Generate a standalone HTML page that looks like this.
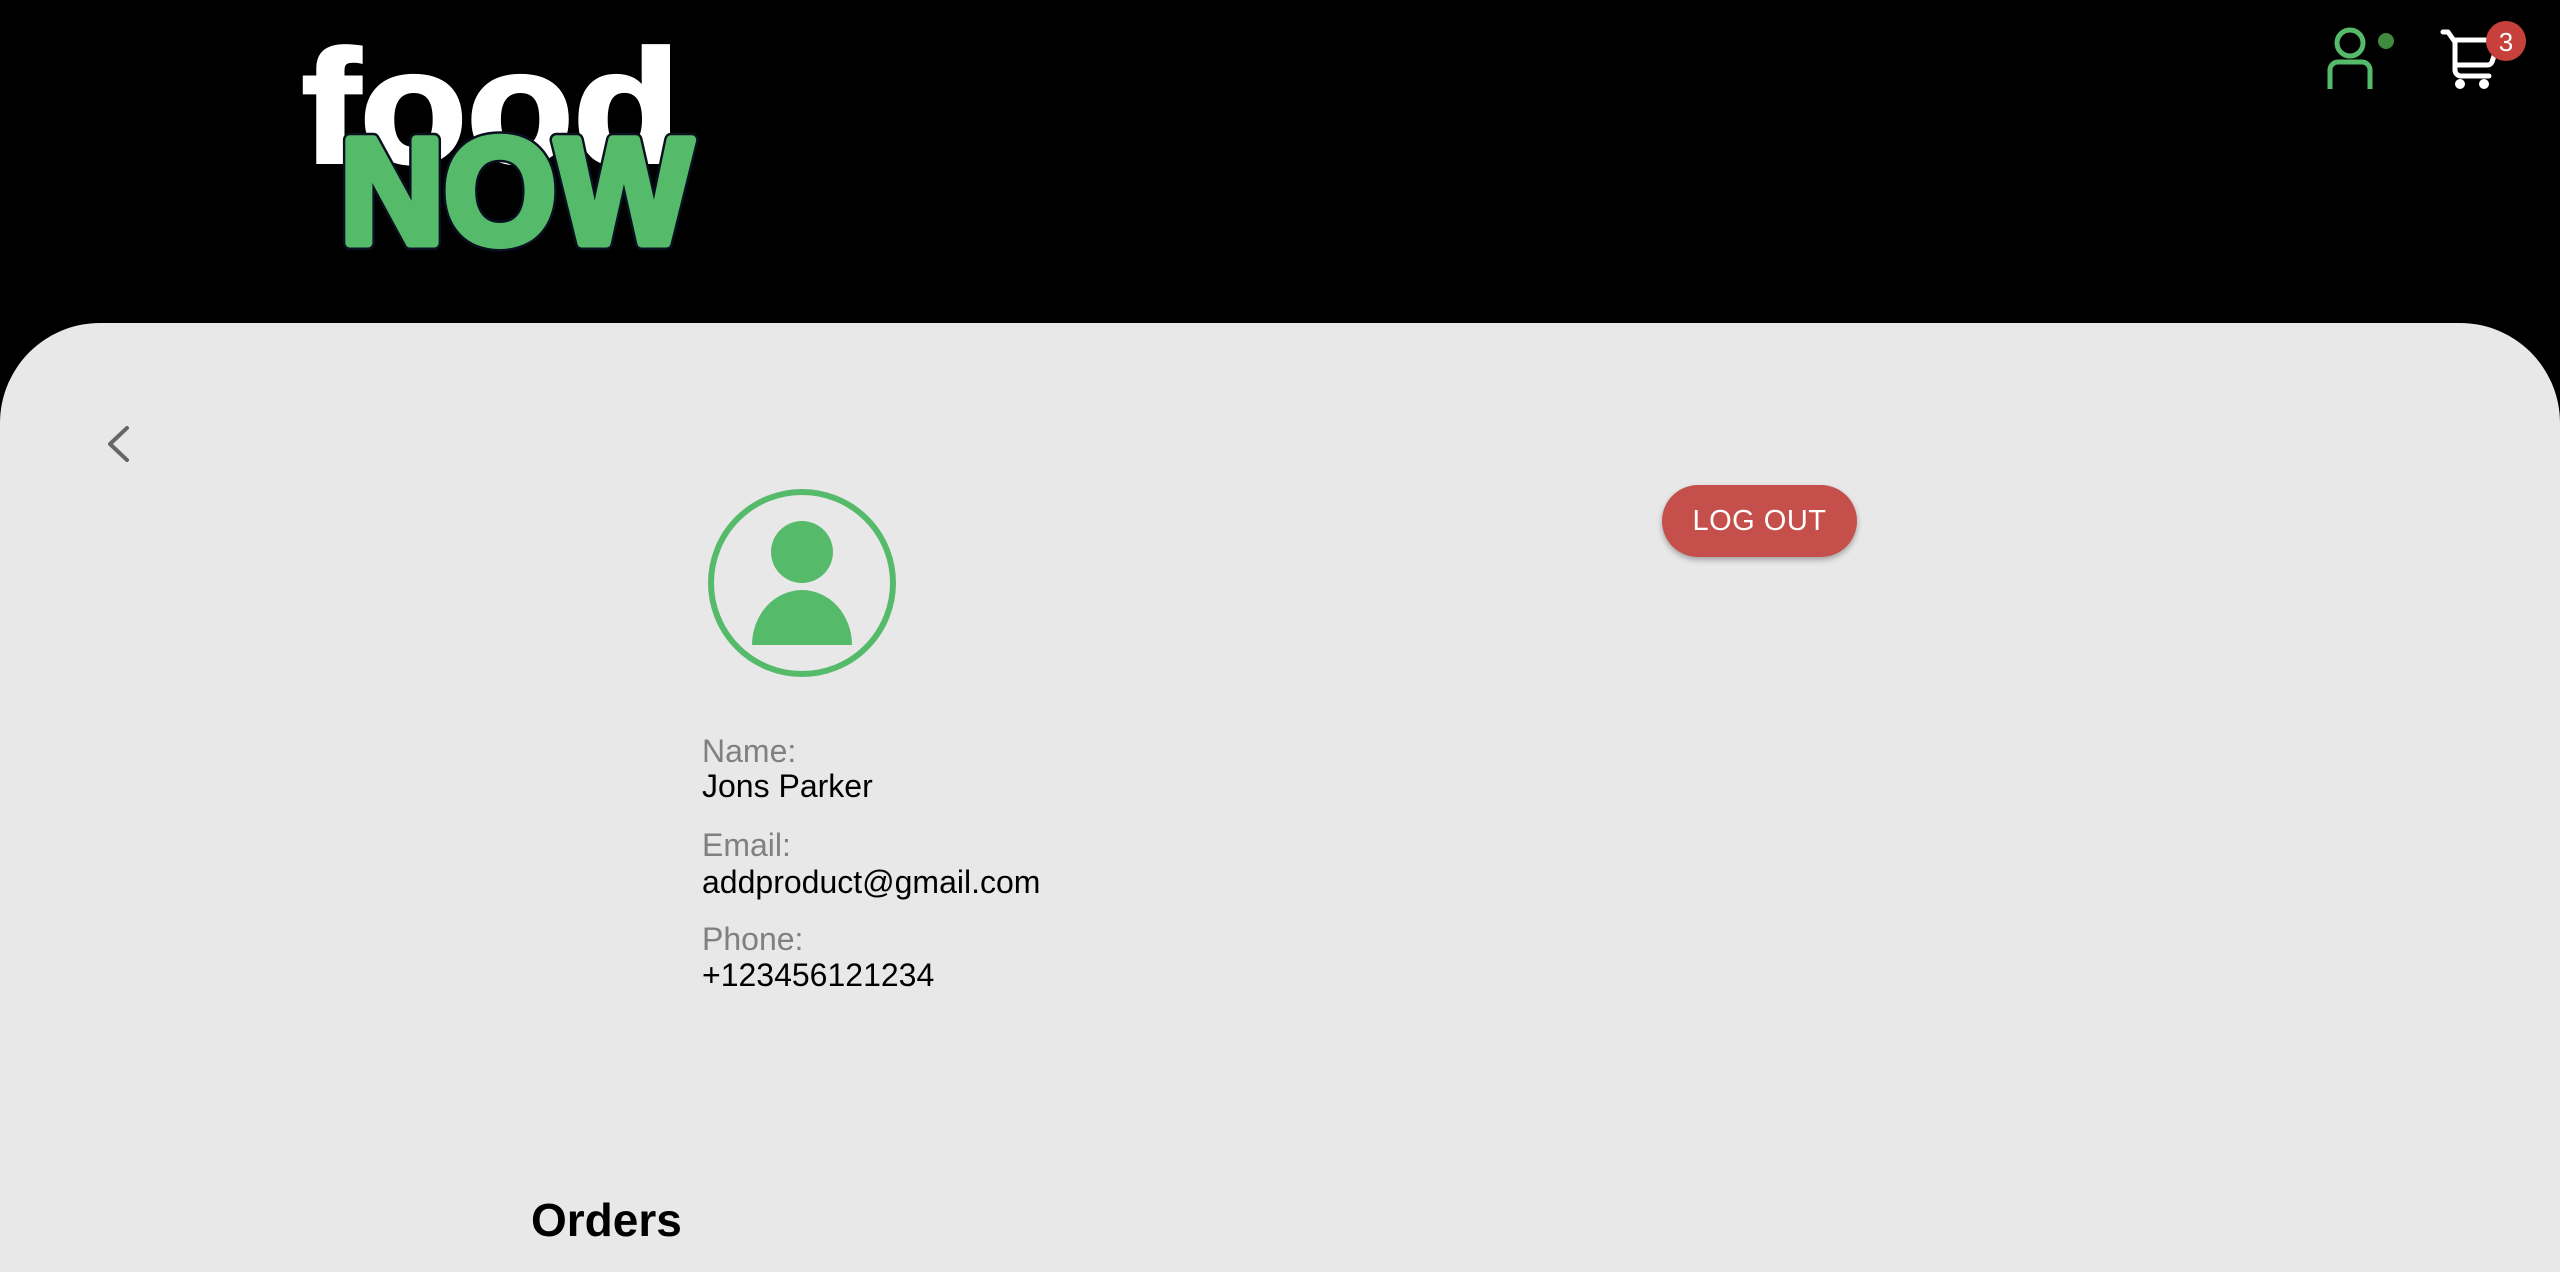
<!DOCTYPE html>
<html><head><meta charset="utf-8"><style>
*{margin:0;padding:0;box-sizing:border-box}
html,body{width:2560px;height:1272px;overflow:hidden}
body{background:#000;position:relative;font-family:"Liberation Sans",Arial,sans-serif}
.panel{position:absolute;left:0;top:323px;width:2560px;height:949px;background:#e8e8e8;border-radius:100px 100px 0 0}
.t{position:absolute;left:702px;font-size:32px;line-height:1;white-space:nowrap}
.l{color:#808080}
.v{color:#000}
.btn{position:absolute;left:1662px;top:485px;width:195px;height:72px;border-radius:36px;background:#c5504b;color:#fff;font-size:29px;display:flex;align-items:center;justify-content:center;box-shadow:0 3px 6px rgba(0,0,0,.3);letter-spacing:0.5px}
</style></head><body>
<svg style="position:absolute;left:0;top:0" width="2560" height="323">
<text x="302" y="162" font-family="Liberation Sans" font-weight="bold" font-size="160" fill="#fff" stroke="#fff" stroke-width="4" textLength="378" lengthAdjust="spacingAndGlyphs">food</text>
<text x="340" y="243" font-family="Liberation Sans" font-weight="bold" font-size="150" fill="#55bb6b" stroke="#0b1020" stroke-width="14" stroke-linejoin="round" textLength="352" lengthAdjust="spacingAndGlyphs">NOW</text>
<text x="340" y="243" font-family="Liberation Sans" font-weight="bold" font-size="150" fill="#55bb6b" stroke="#55bb6b" stroke-width="9" stroke-linejoin="round" textLength="352" lengthAdjust="spacingAndGlyphs">NOW</text>
<circle cx="2350" cy="43" r="13" fill="none" stroke="#55bb6b" stroke-width="5"/>
<path d="M2330 89 V70 a8 8 0 0 1 8-8 h24 a8 8 0 0 1 8 8 V89" fill="none" stroke="#55bb6b" stroke-width="5"/>
<circle cx="2386" cy="41" r="8" fill="#3f8a3e"/>
<path d="M2443 32 h5 l7 10 v28 a6 6 0 0 0 6 6 h28 M2455 40 h40 a3 3 0 0 1 3 4 l-6 18 a5 5 0 0 1-5 3 h-32" fill="none" stroke="#fff" stroke-width="5" stroke-linecap="round" stroke-linejoin="round"/>
<circle cx="2460" cy="84" r="5" fill="#fff"/><circle cx="2484" cy="84" r="5" fill="#fff"/>
<circle cx="2506" cy="41" r="20" fill="#c7403b"/>
<text x="2506" y="51" text-anchor="middle" font-family="Liberation Sans" font-size="26" fill="#fff">3</text>
</svg>
<div class="panel"></div>
<svg style="position:absolute;left:0;top:0" width="2560" height="1272">
<path d="M127 428 L110 444 L127 460" fill="none" stroke="#666" stroke-width="4" stroke-linecap="round" stroke-linejoin="round"/>
<circle cx="802" cy="583" r="91" fill="none" stroke="#55bb6b" stroke-width="6"/>
<circle cx="802" cy="552" r="31" fill="#55bb6b"/>
<path d="M752 645 A50 55 0 0 1 852 645 Z" fill="#55bb6b"/>
</svg>
<div class="btn">LOG OUT</div>
<div class="t l" style="top:735px">Name:</div>
<div class="t v" style="top:770px">Jons Parker</div>
<div class="t l" style="top:829px">Email:</div>
<div class="t v" style="top:866px">addproduct@gmail.com</div>
<div class="t l" style="top:923px">Phone:</div>
<div class="t v" style="top:959px">+123456121234</div>
<div style="position:absolute;left:531px;top:1193px;font-size:46px;font-weight:bold;color:#000">Orders</div>
</body></html>
